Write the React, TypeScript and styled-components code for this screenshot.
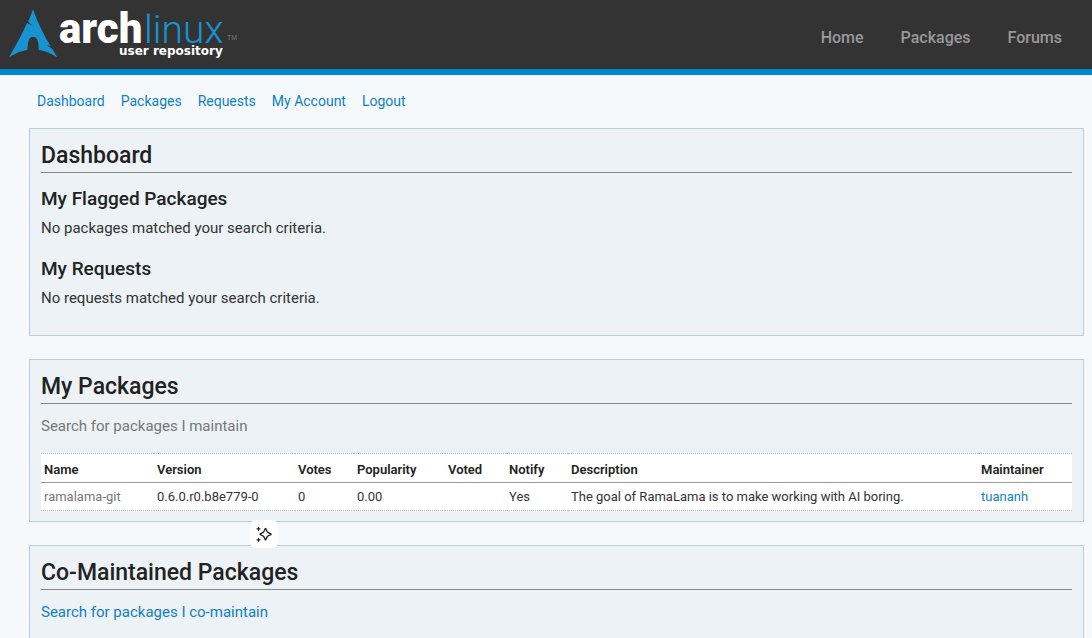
import React from "react";
import styled, { createGlobalStyle } from "styled-components";

const GlobalStyle = createGlobalStyle`
  * { box-sizing: border-box; }
  body {
    margin: 0;
    background: #f6f9fc;
    color: #333;
    font-family: Roboto, "Noto Sans", sans-serif;
    font-size: 15px;
    line-height: 20px;
  }
`;

const Header = styled.header`
  display: flex;
  justify-content: space-between;
  align-items: flex-start;
  background: #333;
  border-bottom: 6px solid #08c;
`;

const LogoLink = styled.a`
  display: block;
  svg { display: block; }
`;

const SiteNav = styled.nav`
  display: flex;
  gap: 37px;
  padding: 27px 30px 0 0;
`;

const SiteLink = styled.a`
  color: #999;
  font-size: 16px;
  line-height: 22px;
  font-weight: 500;
  text-decoration: none;
`;

const Content = styled.main`
  padding: 16px 8px 0 29px;
`;

const UserNav = styled.nav`
  display: flex;
  gap: 16px;
  padding: 0 8px;
  margin-bottom: 17px;
  font-size: 14px;
`;

const Link = styled.a<{ $visited?: boolean }>`
  color: ${(p) => (p.$visited ? "#777" : "#1080c4")};
  text-decoration: none;
`;

const Box = styled.section`
  background: #ecf2f5;
  border: 1px solid #bcd;
  padding: 10px 11px;
  margin-bottom: 23px;
`;

const Title = styled.h2`
  margin: 0 0 12px;
  border-bottom: 1px solid #888;
  color: #222;
  font-size: 23px;
  line-height: 33px;
  font-weight: 500;
`;

const Subtitle = styled.h3`
  margin: 0 0 5px;
  color: #222;
  font-size: 19px;
  line-height: 28px;
  font-weight: 500;
`;

const Text = styled.p`
  margin: 0 0 17px;
`;

const Table = styled.table`
  width: 100%;
  table-layout: fixed;
  border-collapse: collapse;
  background: #fff;
  border-top: 1px dotted #bbb;
  border-bottom: 1px dotted #bbb;
  font-size: 13px;
  line-height: 18px;
  text-align: left;
  th { padding: 7px 3px 3px; color: #222; font-weight: 600; border-bottom: 1px solid #999; }
  td { padding: 5px 3px 4px; white-space: nowrap; }
`;

const Col = styled.col<{ $w?: number }>`
  width: ${(p) => (p.$w ? `${p.$w}px` : "auto")};
`;

const AssistButton = styled.button`
  position: fixed;
  left: 250px;
  top: 520px;
  width: 28px;
  height: 28px;
  padding: 6px;
  border: 0;
  border-radius: 6px;
  background: #fff;
  svg { display: block; }
`;

const Logo = () => (
  <svg width="240" height="69" viewBox="0 0 240 69" role="img" aria-label="Arch Linux User Repository">
    <path
      fill="#1793d1"
      d="M33 9.300C31.500 13.500 30 17.500 28.200 21.400c1.200 1.800 2.900 3.200 5 4.300-2.300-.5-4.400-1.500-6.200-2.700C22.500 33 16 45.500 9 57.200c6-3.600 12-6.200 18.600-7.400-.1-7.800 1.400-13 5.500-13 4.200 0 5.700 5.200 5.600 13 6.500 1.200 12.500 3.800 18.500 7.400l-4.600-7.800c-1.800-1.700-4-3.200-6.400-4.300 1.700.2 3.200.7 4.500 1.300C43.500 34.500 37.500 22.500 33 9.300z"
    />
    <text x="59" y="43" fill="#fff" fontFamily="Roboto, sans-serif" fontWeight="900" fontSize="42">arch</text>
    <text x="144" y="43" fill="#1793d1" fontFamily="Roboto, sans-serif" fontWeight="300" fontSize="39">linux</text>
    <text x="227" y="40" fill="#777" fontFamily="Liberation Sans, sans-serif" fontSize="7">TM</text>
    <text x="119" y="55" fill="#fff" fontFamily="DejaVu Sans, sans-serif" fontWeight="700" fontSize="12">user repository</text>
  </svg>
);

const userLinks = ["Dashboard", "Packages", "Requests", "My Account", "Logout"];
const columns: [string, number?][] = [
  ["Name", 113], ["Version", 141], ["Votes", 59], ["Popularity", 91],
  ["Voted", 61], ["Notify", 62], ["Description"], ["Maintainer", 94],
];

export default function App() {
  return (
    <>
      <GlobalStyle />
      <Header>
        <LogoLink href="#"><Logo /></LogoLink>
        <SiteNav>
          {["Home", "Packages", "Forums"].map((t) => <SiteLink href="#" key={t}>{t}</SiteLink>)}
        </SiteNav>
      </Header>
      <Content>
        <UserNav>
          {userLinks.map((t) => <Link href="#" key={t}>{t}</Link>)}
        </UserNav>
        <Box>
          <Title>Dashboard</Title>
          <Subtitle>My Flagged Packages</Subtitle>
          <Text>No packages matched your search criteria.</Text>
          <Subtitle>My Requests</Subtitle>
          <Text>No requests matched your search criteria.</Text>
        </Box>
        <Box>
          <Title>My Packages</Title>
          <Text><Link href="#" $visited>Search for packages I maintain</Link></Text>
          <Table>
            <colgroup>{columns.map(([n, w]) => <Col key={n} $w={w} />)}</colgroup>
            <thead>
              <tr>{columns.map(([n]) => <th scope="col" key={n}>{n}</th>)}</tr>
            </thead>
            <tbody>
              <tr>
                <td><Link href="#" $visited>ramalama-git</Link></td>
                <td>0.6.0.r0.b8e779-0</td>
                <td>0</td>
                <td>0.00</td>
                <td />
                <td>Yes</td>
                <td>The goal of RamaLama is to make working with AI boring.</td>
                <td><Link href="#">tuananh</Link></td>
              </tr>
            </tbody>
          </Table>
        </Box>
        <Box>
          <Title>Co-Maintained Packages</Title>
          <Text><Link href="#">Search for packages I co-maintain</Link></Text>
        </Box>
      </Content>
      <AssistButton aria-label="Assistant">
        <svg width="16" height="16" viewBox="0 0 16 16" fill="none" stroke="#222" strokeWidth="1.400" strokeLinejoin="round" strokeLinecap="round">
          <path d="M9.500 2.500c.7 0 .9 2.500 2 3.600s3.700 1.400 3.700 2.100-2.600 1-3.700 2.100-1.300 3.600-2 3.600-.9-2.500-2-3.600-3.600-1.400-3.600-2.100 2.500-1 3.600-2.100 1.300-3.600 2-3.600z" />
          <path strokeWidth="1.200" d="M2.500 1.300v3M1 2.800h3M2.500 12.300v3M1 13.800h3" />
        </svg>
      </AssistButton>
    </>
  );
}
